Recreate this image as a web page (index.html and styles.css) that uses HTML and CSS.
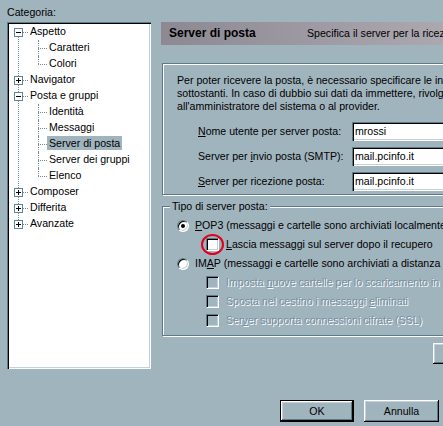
FILE: index.html
```html
<!DOCTYPE html>
<html lang="it">
<head>
<meta charset="UTF-8">
<title>Preferenze</title>
<link rel="stylesheet" href="styles.css">
</head>
<body>

<div class="dialog">
	<div class="main">
		<div class="side">
			<div class="side-title">Categoria:</div>
			<div class="tree">
				<ul class="root">
					<li class="open">
						<div class="row"><svg class="exp" width="9" height="9"><rect x="0.5" y="0.5" width="8" height="8" fill="#fff" stroke="#5f8795"/><path d="M2 4.5h5" stroke="#000"/></svg><span class="tick"></span><span class="label">Aspetto</span></div>
						<ul class="sub">
							<li><div class="row"><span class="tick"></span><span class="label">Caratteri</span></div></li>
							<li class="last"><div class="row"><span class="tick"></span><span class="label">Colori</span></div></li>
						</ul>
					</li>
					<li>
						<div class="row"><svg class="exp" width="9" height="9"><rect x="0.5" y="0.5" width="8" height="8" fill="#fff" stroke="#5f8795"/><path d="M2 4.5h5M4.5 2v5" stroke="#000"/></svg><span class="tick"></span><span class="label">Navigator</span></div>
					</li>
					<li class="open">
						<div class="row"><svg class="exp" width="9" height="9"><rect x="0.5" y="0.5" width="8" height="8" fill="#fff" stroke="#5f8795"/><path d="M2 4.5h5" stroke="#000"/></svg><span class="tick"></span><span class="label">Posta e gruppi</span></div>
						<ul class="sub">
							<li><div class="row"><span class="tick"></span><span class="label">Identità</span></div></li>
							<li><div class="row"><span class="tick"></span><span class="label">Messaggi</span></div></li>
							<li><div class="row"><span class="tick"></span><span class="label on">Server di posta</span></div></li>
							<li><div class="row"><span class="tick"></span><span class="label">Server dei gruppi</span></div></li>
							<li class="last"><div class="row"><span class="tick"></span><span class="label">Elenco</span></div></li>
						</ul>
					</li>
					<li>
						<div class="row"><svg class="exp" width="9" height="9"><rect x="0.5" y="0.5" width="8" height="8" fill="#fff" stroke="#5f8795"/><path d="M2 4.5h5M4.5 2v5" stroke="#000"/></svg><span class="tick"></span><span class="label">Composer</span></div>
					</li>
					<li>
						<div class="row"><svg class="exp" width="9" height="9"><rect x="0.5" y="0.5" width="8" height="8" fill="#fff" stroke="#5f8795"/><path d="M2 4.5h5M4.5 2v5" stroke="#000"/></svg><span class="tick"></span><span class="label">Differita</span></div>
					</li>
					<li>
						<div class="row"><svg class="exp" width="9" height="9"><rect x="0.5" y="0.5" width="8" height="8" fill="#fff" stroke="#5f8795"/><path d="M2 4.5h5M4.5 2v5" stroke="#000"/></svg><span class="tick"></span><span class="label">Avanzate</span></div>
					</li>
				</ul>
			</div>
		</div>

		<div class="panel">
			<div class="head">
				<span class="head-title">Server di posta</span>
				<span class="head-desc">Specifica il server per la ricezione della posta</span>
			</div>

			<div class="group group-server">
				<p class="intro">Per poter ricevere la posta, è necessario specificare le informazioni<br>sottostanti. In caso di dubbio sui dati da immettere, rivolgersi<br>all'amministratore del sistema o al provider.</p>
				<div class="fields">
					<div class="field"><span class="field-label"><u>N</u>ome utente per server posta:</span><span class="field-input">mrossi</span></div>
					<div class="field"><span class="field-label">Server per <u>i</u>nvio posta (SMTP):</span><span class="field-input">mail.pcinfo.it</span></div>
					<div class="field"><span class="field-label"><u>S</u>erver per ricezione posta:</span><span class="field-input">mail.pcinfo.it</span></div>
				</div>
			</div>

			<div class="group group-type">
				<span class="legend">Tipo di server posta:</span>
				<div class="opt"><span class="radio checked"></span><span><u>P</u>OP3 (messaggi e cartelle sono archiviati localmente sul computer)</span></div>
				<div class="opt opt-sub"><span class="check"><span class="ring"></span></span><span><u>L</u>ascia messaggi sul server dopo il recupero</span></div>
				<div class="opt"><span class="radio"></span><span>IM<u>A</u>P (messaggi e cartelle sono archiviati a distanza sul server)</span></div>
				<div class="opt opt-sub off"><span class="check"></span><span>Imposta <u>n</u>uove cartelle per lo scaricamento in differita</span></div>
				<div class="opt opt-sub off"><span class="check"></span><span>Sposta nel cestino i messaggi <u>e</u>liminati</span></div>
				<div class="opt opt-sub off"><span class="check"></span><span>Ser<u>v</u>er supporta connessioni cifrate (SSL)</span></div>
			</div>

			<div class="panel-foot"><span class="btn">Avanzate...</span></div>
		</div>
	</div>

	<div class="buttons">
		<span class="btn btn-default">OK</span>
		<span class="btn btn-cancel">Annulla</span>
	</div>
</div>

</body>
</html>
```

FILE: styles.css
```css
* {
	margin: 0;
	padding: 0;
	box-sizing: border-box;
}
html, body {
	width: 443px;
	height: 426px;
	overflow: hidden;
}
body {
	background: #a0b4be;
	color: #000;
	font: 10.6px/13px "Liberation Sans", Arial, sans-serif;
}
ul {
	list-style: none;
}
u {
	text-decoration: underline;
	text-underline-offset: 1px;
}

.dialog {
	padding-left: 7px;
}
.main {
	display: flex;
	align-items: flex-start;
}

/* left: category tree */
.side {
	flex: none;
	width: 144px;
}
.side-title {
	height: 22px;
	padding-top: 5px;
	line-height: 14px;
}
.tree {
	height: 347px;
	padding: 2px;
	background: #fff;
	box-shadow: inset 1px 1px #5c7a88, inset 2px 2px #000, inset -1px -1px #fff, inset -2px -2px #c4d2d8;
}
.root {
	position: relative;
}
.root::before {
	content: "";
	position: absolute;
	left: 9px;
	top: 8px;
	bottom: 8px;
	border-left: 1px dotted #6f8e9a;
}
.row {
	display: flex;
	align-items: center;
	height: 16px;
	padding-left: 5px;
}
.exp {
	position: relative;
	flex: none;
	display: block;
}
.tick {
	flex: none;
	width: 5px;
	border-top: 1px dotted #6f8e9a;
}
.label {
	align-self: flex-start;
	padding: 0 2px;
	line-height: 14px;
	white-space: nowrap;
}
.label.on {
	background: #a0b4be;
}
.sub li {
	position: relative;
}
.sub li::before {
	content: "";
	position: absolute;
	left: 29px;
	top: 0;
	bottom: 0;
	border-left: 1px dotted #6f8e9a;
}
.sub li.last::before {
	bottom: auto;
	height: 8px;
}
.sub .row {
	padding-left: 29px;
}
.sub .tick {
	width: 9px;
}

/* right: settings panel */
.panel {
	flex: none;
	width: 440px;
	margin-left: 10px;
	padding-top: 22px;
	white-space: nowrap;
}
.head {
	display: flex;
	align-items: center;
	height: 23px;
	padding-left: 8px;
	background: linear-gradient(to right, #8d8993, #a9a6ae 60%, #b8b6bb);
}
.head-title {
	width: 138px;
	font-weight: bold;
	font-size: 12px;
}
.group {
	margin-left: 1px;
	border: 1px solid #5c7a88;
	box-shadow: inset 1px 1px #fff, 1px 1px #fff;
}
.group-server {
	height: 132px;
	margin-top: 18px;
	padding: 10px 0 0 14px;
}
.fields {
	display: flex;
	flex-direction: column;
	gap: 6px;
	margin-top: 9px;
}
.field {
	display: flex;
	align-items: center;
	height: 19px;
	padding-left: 21px;
}
.field-label {
	flex: none;
	width: 154px;
}
.field-input {
	flex: none;
	width: 130px;
	height: 19px;
	padding-left: 3px;
	line-height: 19px;
	background: #fff;
	box-shadow: inset 1px 1px #5c7a88, inset 2px 2px #000, inset -1px -1px #fff, inset -2px -2px #c4d2d8;
}

.group-type {
	margin-top: 11px;
	padding: 0 0 5px 14px;
}
.legend {
	display: table;
	margin: -7px 0 3px -7px;
	padding: 0 2px;
	background: #a0b4be;
	line-height: 13px;
}
.opt {
	display: flex;
	align-items: center;
	height: 19px;
}
.opt-sub {
	padding-left: 29px;
}
.off {
	color: #7890a0;
	text-shadow: 1px 1px #fff;
}
.radio {
	position: relative;
	flex: none;
	width: 12px;
	height: 12px;
	margin-right: 6px;
	border: 1px solid;
	border-color: #5c7a88 #fff #fff #5c7a88;
	border-radius: 50%;
	background: #fff;
	box-shadow: inset 1px 1px #000, inset -1px -1px #c4d2d8;
}
.radio.checked::after {
	content: "";
	position: absolute;
	left: 3px;
	top: 3px;
	width: 4px;
	height: 4px;
	border-radius: 50%;
	background: #000;
}
.check {
	position: relative;
	flex: none;
	width: 13px;
	height: 13px;
	margin-right: 7px;
	border: 1px solid;
	border-color: #5c7a88 #fff #fff #5c7a88;
	background: #fff;
	box-shadow: inset 1px 1px #000, inset -1px -1px #c4d2d8;
}
.off .check {
	background: #a0b4be;
}
.ring {
	position: absolute;
	left: -6px;
	top: -5px;
	width: 23px;
	height: 21px;
	border: 2px solid #e2001a;
	border-radius: 50%;
}

.panel-foot {
	margin: 7px 0 0 272px;
}
.btn {
	display: flex;
	align-items: center;
	justify-content: center;
	width: 75px;
	height: 22px;
	box-shadow: inset -1px -1px #000, inset 1px 1px #fff, inset -2px -2px #5c7a88, inset 2px 2px #c4d2d8;
}
.panel-foot .btn {
	height: 21px;
}
.buttons {
	display: flex;
	gap: 10px;
	margin-top: 31px;
	padding-left: 273px;
}
.btn-default {
	width: 74px;
	border: 1px solid #000;
}
```
